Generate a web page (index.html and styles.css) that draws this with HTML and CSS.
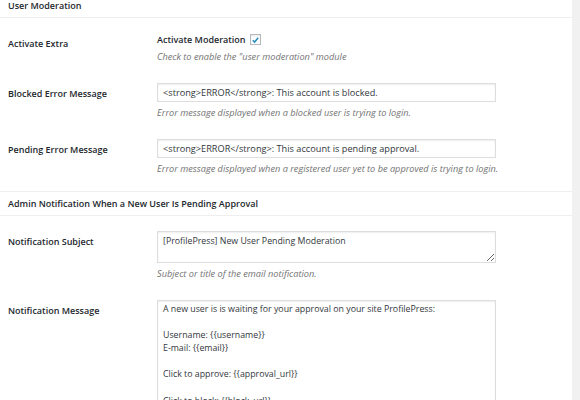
FILE: index.html
```html
<!DOCTYPE html>
<html lang="en">
<head>
    <meta charset="UTF-8">
    <meta name="viewport" content="width=device-width, initial-scale=1.0">
    <title>User Moderation Settings</title>
    <link rel="stylesheet" href="styles.css">
</head>
<body>
    <div class="panel">
        <h3 class="section-title first">User Moderation</h3>
        <div class="section-body">
            <div class="row">
                <div class="label">Activate Extra</div>
                <div class="field">
                    <label class="check-label">Activate Moderation
                        <span class="checkbox">
                            <svg viewBox="0 0 10 10" width="10" height="10"><path d="M2 5.2 L4 7.3 L8 2.6" fill="none" stroke="#1e8cbe" stroke-width="1.6"/></svg>
                        </span>
                    </label>
                    <p class="description">Check to enable the "user moderation" module</p>
                </div>
            </div>
            <div class="row">
                <div class="label">Blocked Error Message</div>
                <div class="field">
                    <input type="text" class="text-input" value="<strong>ERROR</strong>: This account is blocked.">
                    <p class="description">Error message displayed when a blocked user is trying to login.</p>
                </div>
            </div>
            <div class="row">
                <div class="label">Pending Error Message</div>
                <div class="field">
                    <input type="text" class="text-input" value="<strong>ERROR</strong>: This account is pending approval.">
                    <p class="description">Error message displayed when a registered user yet to be approved is trying to login.</p>
                </div>
            </div>
        </div>

        <h3 class="section-title">Admin Notification When a New User Is Pending Approval</h3>
        <div class="section-body">
            <div class="row">
                <div class="label">Notification Subject</div>
                <div class="field">
                    <textarea class="text-area subject">[ProfilePress] New User Pending Moderation</textarea>
                    <p class="description">Subject or title of the email notification.</p>
                </div>
            </div>
            <div class="row">
                <div class="label">Notification Message</div>
                <div class="field">
                    <textarea class="text-area message">A new user is is waiting for your approval on your site ProfilePress:

Username: {{username}}
E-mail: {{email}}

Click to approve: {{approval_url}}

Click to block: {{block_url}}</textarea>
                </div>
            </div>
        </div>
    </div>
</body>
</html>
```

FILE: styles.css
```css
body {
    margin: 0;
    background-color: #f1f1f1;
    font-family: "Open Sans", Arial, sans-serif;
    color: #23282d;
}
.panel {
    width: 572px;
    background-color: #fff;
    height: 400px;
    overflow: hidden;
}
.section-title {
    margin: 0;
    padding: 6px 8px 5px;
    font-size: 9px;
    line-height: 12px;
    font-weight: 600;
    border-top: 1px solid #eee;
    border-bottom: 1px solid #eee;
}
.section-title.first {
    padding-top: 0;
    border-top: none;
}
.section-body {
    padding: 5px 0 6px;
}
.row {
    display: flex;
}
.label {
    width: 149px;
    padding: 14px 0 0 8px;
    font-size: 9px;
    line-height: 13px;
    font-weight: 600;
}
.field {
    padding: 10px 0;
}
.check-label {
    display: flex;
    align-items: center;
    gap: 4px;
    font-size: 9px;
    line-height: 13px;
    font-weight: 600;
}
.checkbox {
    width: 9px;
    height: 9px;
    border: 1px solid #b4b9be;
    box-shadow: inset 0 1px 2px rgba(0, 0, 0, 0.1);
    display: flex;
}
.description {
    margin: 4px 0 0;
    font-size: 9.2px;
    line-height: 13px;
    font-style: italic;
    color: #737373;
}
.text-input, .text-area {
    display: block;
    box-sizing: border-box;
    width: 339px;
    margin: 0;
    border: 1px solid #ddd;
    box-shadow: inset 0 1px 2px rgba(0, 0, 0, 0.07);
    font-family: "Open Sans", Arial, sans-serif;
    color: #32373c;
    background: #fff;
    outline: none;
}
.text-input {
    height: 19px;
    padding: 0 5px;
    font-size: 9.2px;
}
.text-area {
    padding: 2px 5px;
    font-size: 8.8px;
    line-height: 13.1px;
    resize: vertical;
}
.text-area.subject {
    height: 32px;
    padding-top: 3px;
}
.text-area.message {
    height: 160px;
}
```
